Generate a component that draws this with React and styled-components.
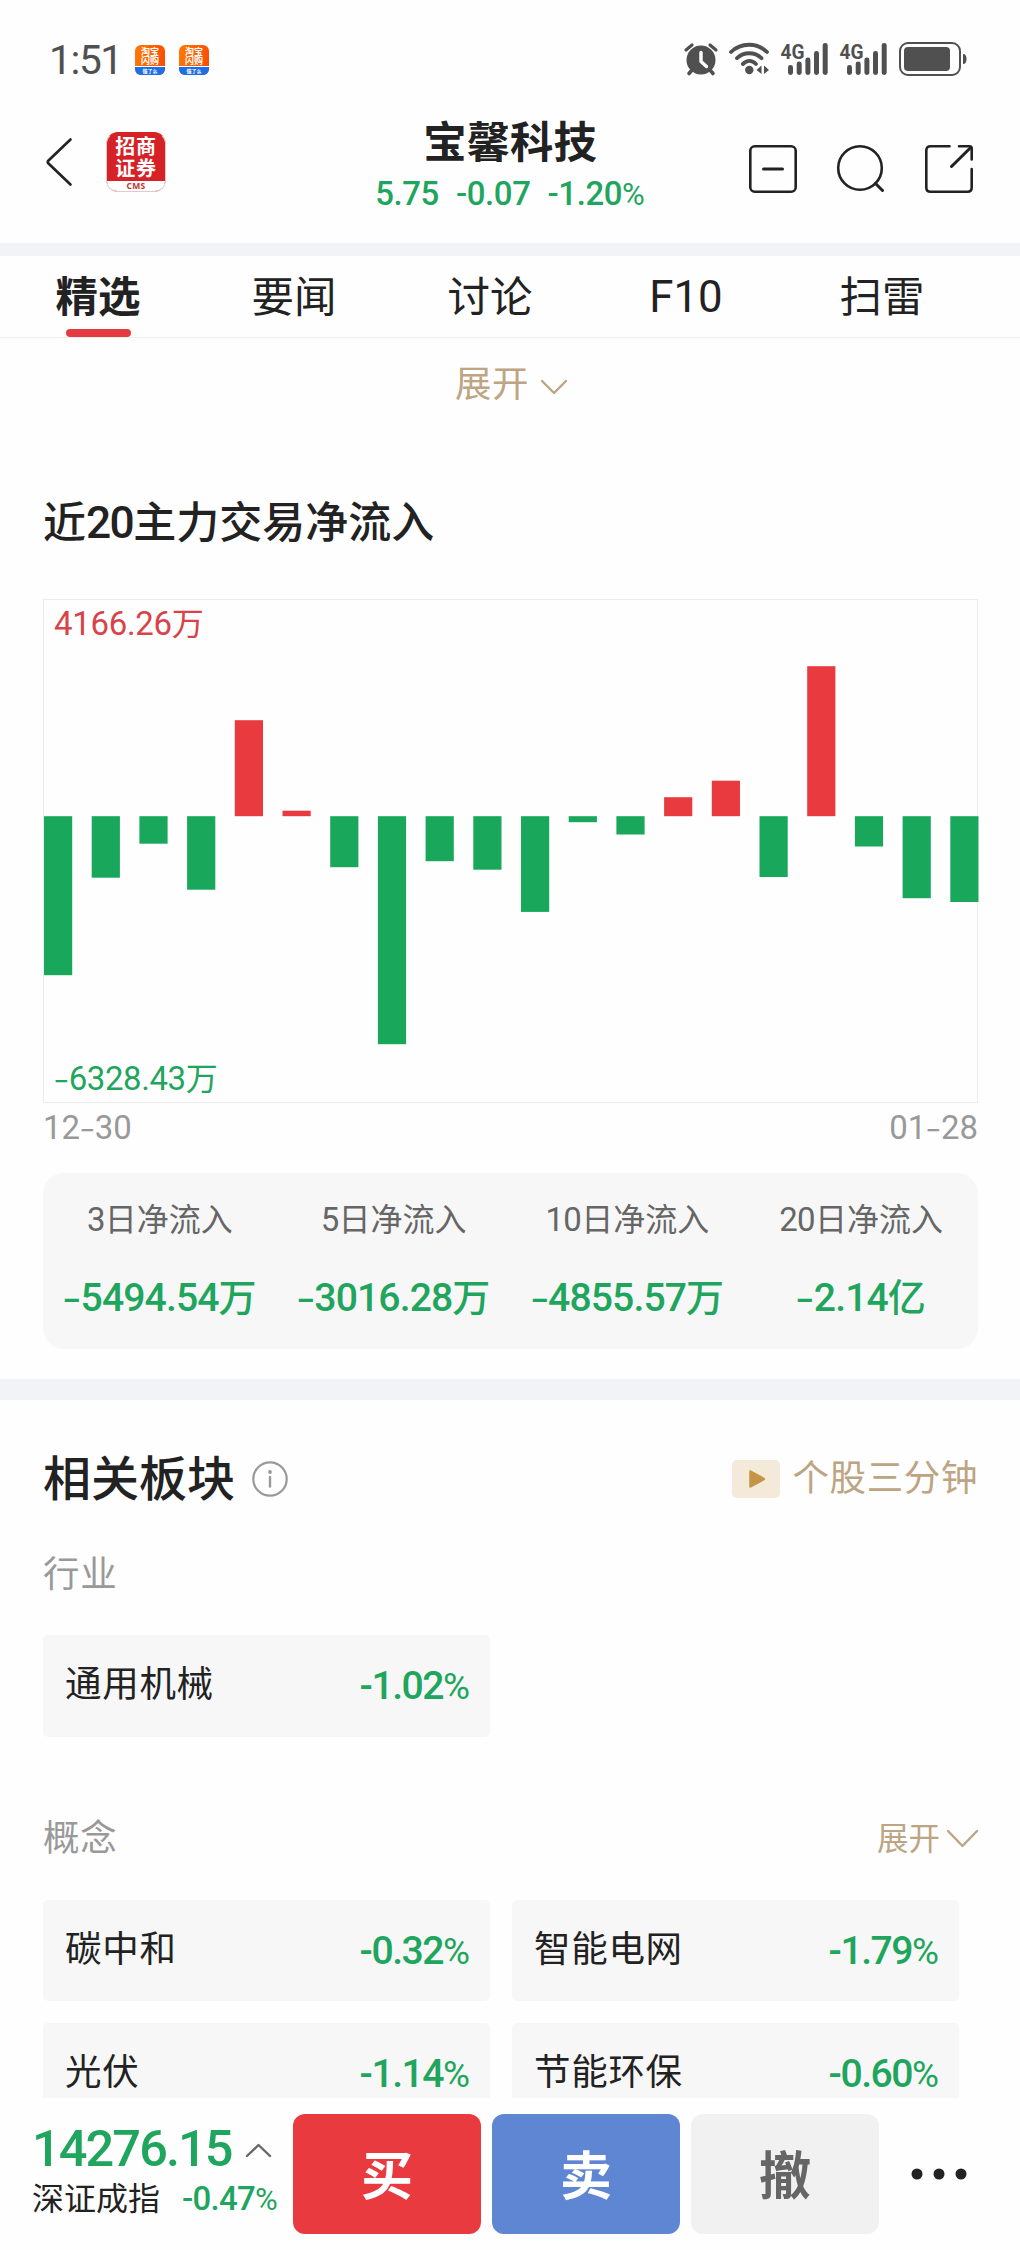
import React from "react";
import styled, { createGlobalStyle } from "styled-components";

const GREEN = "#1fa55d";
const RED = "#e93a3f";
const INK = "#222222";
const GOLD = "#bda483";

const Global = createGlobalStyle`
  * { box-sizing: border-box; }
  body { margin: 0; background: #fefefe; }
  button { border: 0; padding: 0; background: none; font: inherit; color: inherit; }
`;

const Page = styled.div`
  width: 1020px;
  height: 2250px;
  display: flex;
  flex-direction: column;
  overflow: hidden;
  background: #fefefe;
  color: ${INK};
  font-family: "Noto Sans CJK SC", "Noto Sans", sans-serif;
`;

const LabelBox = styled.span`
  display: block;
  flex: none;
  white-space: nowrap;
  font-size: ${(p) => p.$size}px;
  line-height: ${(p) => p.$line}px;
  font-weight: ${(p) => p.$weight || 400};
  letter-spacing: ${(p) => p.$track || 0}px;
  color: ${(p) => p.$color || "inherit"};
`;

const Digits = styled.span`
  font-family: Roboto, sans-serif;
  font-size: 1.03em;
  line-height: 0;
  letter-spacing: ${(p) => p.$track || 0}px;
`;

const PercentSign = styled.span`
  font-family: Roboto, sans-serif;
  font-size: 0.97em;
  font-weight: 400;
  line-height: 0;
  letter-spacing: 0;
`;

const LongDash = styled.span`
  display: inline-block;
  width: 0.46em;
  line-height: 0;
  text-align: center;
  letter-spacing: 0;
  transform: scaleX(1.4);
`;

/* Figures are set in Roboto, everything else in the CJK face. */
function Label({ children, numTrack, longDash, ...rest }) {
  const parts = String(children).split(/([0-9A-Z.:]+|-|%)/).filter(Boolean);
  return (
    <LabelBox {...rest}>
      {parts.map((part, i) => {
        if (part === "%") return <PercentSign key={i}>%</PercentSign>;
        if (part === "-" && longDash) return <LongDash key={i}>-</LongDash>;
        if (/^[0-9A-Z.:-]+$/.test(part)) {
          return <Digits key={i} $track={numTrack}>{part}</Digits>;
        }
        return part;
      })}
    </LabelBox>
  );
}

const Svg = styled.svg`
  display: block;
  flex: none;
  overflow: visible;
`;

/* ---------- status bar ---------- */

const StatusBar = styled.div`
  height: 84px;
  flex: none;
  display: flex;
  align-items: flex-start;
  justify-content: space-between;
  padding: 30px 53px 0 49px;
  color: #505050;
`;

const StatusLeft = styled.div`
  display: flex;
  align-items: flex-start;
`;

const Notices = styled.div`
  display: flex;
  gap: 14px;
  padding: 15px 0 0 14px;
`;

const Clock = styled.div`
  width: 72px;
`;

const ShopIcon = styled.div`
  width: 30px;
  height: 30px;
  border-radius: 6px;
  overflow: hidden;
  background: linear-gradient(100deg, #ff7a00, #fb4a05);
  display: flex;
  flex-direction: column;
  align-items: center;
  color: #fff;
`;

const ShopText = styled.span`
  height: 21px;
  padding-top: 2px;
  font-size: 9px;
  line-height: 9px;
  font-weight: 700;
  text-align: center;
  width: 20px;
  word-break: break-all;
`;

const ShopStrip = styled.span`
  width: 30px;
  height: 9px;
  background: #1e6fe6;
  font-size: 5px;
  line-height: 8px;
  font-weight: 700;
  text-align: center;
  border-top: 1px solid #fff;
`;

const StatusRight = styled.div`
  display: flex;
  align-items: center;
  padding-top: 12px;
`;

const StatusGlyph = styled.div`
  margin-left: ${(p) => p.$gap}px;
`;

/* ---------- header ---------- */

const Header = styled.header`
  height: 159px;
  flex: none;
  display: grid;
  grid-template-columns: 330px 1fr 330px;
`;

const HeaderLeft = styled.div`
  display: flex;
  align-items: flex-start;
  padding: 48px 0 0 46px;
  gap: 34px;
`;

const Back = styled.div`
  padding-top: 6px;
`;

const Broker = styled.div`
  width: 60px;
  height: 60px;
  border-radius: 12px;
  background: #d62126;
  border: 1px solid #e3c9c9;
  border-top-color: #d62126;
  display: flex;
  flex-direction: column;
  align-items: center;
  color: #fff;
`;

const BrokerName = styled.div`
  height: 48px;
  padding-top: 2px;
  display: flex;
  flex-direction: column;
  font-size: 20px;
  line-height: 21.5px;
  font-weight: 700;
  letter-spacing: 0.7px;
`;

const BrokerTag = styled.span`
  width: 58px;
  height: 10px;
  border-radius: 0 0 11px 11px;
  background: #fff;
  color: #c3362f;
  font: 700 8.5px/9px "Open Sans", sans-serif;
  letter-spacing: 0.3px;
  text-align: center;
`;

const TitleBlock = styled.div`
  display: flex;
  flex-direction: column;
  align-items: center;
  padding-top: 24px;
`;

const Quote = styled.div`
  display: flex;
  gap: 17px;
  margin-top: -1px;
`;

const HeaderActions = styled.div`
  display: flex;
  align-items: flex-start;
  padding: 61px 0 0 59px;
  gap: 40px;
`;

const Band = styled.div`
  height: ${(p) => p.$h}px;
  flex: none;
  background: #f2f3f6;
`;

/* ---------- tabs ---------- */

const Tabs = styled.nav`
  height: 82px;
  flex: none;
  display: flex;
  border-bottom: 1px solid #eeeeef;
`;

const Tab = styled.button`
  width: 196px;
  height: 81px;
  display: flex;
  flex-direction: column;
  align-items: center;
  justify-content: space-between;
  padding-top: 7px;
`;

const Underline = styled.span`
  width: 65px;
  height: 8px;
  border-radius: 4px;
  background: #e33b41;
`;

/* ---------- content ---------- */

const Content = styled.main`
  height: 1760px;
  flex: none;
  overflow: hidden;
  display: flex;
  flex-direction: column;
`;

const Expand = styled.div`
  height: 93px;
  flex: none;
  display: flex;
  justify-content: center;
  padding: 18px 0 0 2px;
  gap: 12px;
`;

const FlowSection = styled.section`
  height: 948px;
  flex: none;
  padding: 57px 42px 0 43px;
  display: flex;
  flex-direction: column;
`;

const ChartFrame = styled.div`
  height: 504px;
  margin-top: 49px;
  flex: none;
  border: 1px solid #ececec;
  display: grid;
`;

const ChartLayer = styled.div`
  grid-area: 1 / 1;
`;

const ChartLabels = styled(ChartLayer)`
  display: flex;
  flex-direction: column;
  justify-content: space-between;
  margin-top: -1px;
  padding: 0 0 3px 10px;
`;

const Dates = styled.div`
  display: flex;
  justify-content: space-between;
  color: #999;
`;

const Summary = styled.div`
  margin-top: 26px;
  height: 176px;
  flex: none;
  border-radius: 21px;
  background: #f7f7f7;
  display: grid;
  grid-template-columns: repeat(4, 1fr);
`;

const SummaryCell = styled.div`
  display: flex;
  flex-direction: column;
  align-items: center;
  padding-top: 21px;
  gap: 27px;
`;

const SectorSection = styled.section`
  flex: none;
  padding: 0 42px 0 43px;
  display: flex;
  flex-direction: column;
`;

const SectorHead = styled.div`
  height: 130px;
  padding-top: 41px;
  display: flex;
  justify-content: space-between;
`;

const HeadGroup = styled.div`
  display: flex;
  align-items: flex-start;
  gap: ${(p) => p.$gap}px;
`;

const Offset = styled.div`
  padding-top: ${(p) => p.$top}px;
`;

const SubHead = styled.div`
  height: ${(p) => p.$h}px;
  padding-top: ${(p) => p.$top}px;
  display: flex;
  justify-content: space-between;
  color: #999;
`;

const Cards = styled.div`
  display: grid;
  grid-template-columns: 447px 447px;
  gap: 22px;
`;

const Card = styled.div`
  height: ${(p) => p.$h || 101}px;
  border-radius: 5px;
  background: #f7f7f7;
  display: flex;
  justify-content: space-between;
  padding: 21px 20px 0 22px;
`;

/* ---------- trade bar ---------- */

const TradeBar = styled.footer`
  flex: 1;
  display: flex;
  align-items: flex-start;
  padding-top: 16px;
  background: #fefefe;
`;

const IndexBlock = styled.div`
  width: 293px;
  padding-left: 32px;
  display: flex;
  flex-direction: column;
`;

const IndexTop = styled.div`
  display: flex;
  height: 60px;
`;

const IndexValue = styled.div`
  width: 214px;
`;

const IndexBottom = styled.div`
  display: flex;
  gap: 22px;
`;

const Buttons = styled.div`
  display: flex;
  gap: 11px;
`;

const TradeButton = styled.button`
  width: 188px;
  height: 120px;
  border-radius: 12px;
  background: ${(p) => p.$bg};
  color: ${(p) => p.$fg};
  display: flex;
  justify-content: center;
  padding-top: 23px;
`;

const More = styled.div`
  padding: 54px 0 0 32px;
`;

/* ---------- drawings ---------- */

function Alarm() {
  return (
    <Svg width="34" height="34" viewBox="0 0 34 34" fill="none">
      <path d="M2 8 L8 3 M26 3 L32 8" stroke="#505050" strokeWidth="3.2" strokeLinecap="round" />
      <circle cx="17" cy="18" r="14.5" fill="#505050" />
      <path d="M8 28 L5 31.5 M26 28 L29 31.5" stroke="#505050" strokeWidth="3.6" strokeLinecap="round" />
      <path d="M17 10.5 V19.5 L22.5 24.5" stroke="#fefefe" strokeWidth="3.4" strokeLinecap="round" strokeLinejoin="round" />
    </Svg>
  );
}

function Wifi() {
  return (
    <Svg width="41" height="34" viewBox="0 0 41 34" fill="none" stroke="#505050" strokeLinecap="round">
      <path d="M2 10 C12 0.3 28 0.3 38 10" strokeWidth="3.8" />
      <path d="M8 16.2 C15 9.6 25.5 9.6 32.5 16.2" strokeWidth="3.8" />
      <path d="M13.8 22 C18 18 23 18 27 22" strokeWidth="3.8" />
      <circle cx="20.3" cy="28" r="4.2" fill="#505050" stroke="none" />
      <path d="M32.5 23.5 V32 L27.5 28 Z M35 23.5 L40 28 L35 32 Z" fill="#505050" stroke="none" />
    </Svg>
  );
}

function Signal() {
  const bars = [[7, 23], [15.7, 19.5], [24.4, 15.5], [33, 9], [41.7, 1]];
  return (
    <Svg width="47" height="34" viewBox="0 0 47 34">
      {bars.map(([x, y]) => (
        <rect key={x} x={x} y={y} width="5" height={33 - y} rx="2.4" fill="#505050" />
      ))}
      <text x="-0.5" y="17" fontFamily="Roboto, sans-serif" fontWeight="700" fontSize="21" textLength="24" lengthAdjust="spacingAndGlyphs" fill="#505050">4G</text>
    </Svg>
  );
}

function Battery() {
  return (
    <Svg width="68" height="34" viewBox="0 0 68 34">
      <rect x="1" y="1" width="60" height="32" rx="8" fill="none" stroke="#505050" strokeWidth="2" />
      <rect x="5" y="5" width="46" height="24" rx="4" fill="#505050" />
      <path d="M64 12 Q67.5 12 67.5 17 Q67.5 22 64 22 Z" fill="#505050" />
    </Svg>
  );
}

function MinusSquare() {
  return (
    <Svg width="48" height="48" viewBox="0 0 48 48" fill="none" stroke={INK} strokeWidth="2.6" strokeLinecap="round">
      <rect x="1.3" y="1.3" width="45.4" height="45.4" rx="4.5" />
      <path d="M14.5 24 H33.5" strokeWidth="3" />
    </Svg>
  );
}

function Search() {
  return (
    <Svg width="48" height="48" viewBox="0 0 48 48" fill="none" stroke={INK} strokeWidth="2.6" strokeLinecap="round">
      <circle cx="23" cy="23" r="21.8" />
      <path d="M38.5 38.5 L45.5 45.5" strokeWidth="3" />
    </Svg>
  );
}

function Share() {
  return (
    <Svg width="48" height="48" viewBox="0 0 48 48" fill="none" stroke={INK} strokeWidth="2.6" strokeLinecap="round" strokeLinejoin="round">
      <path d="M24.5 1.3 H5.5 Q1.3 1.3 1.3 5.5 V42.5 Q1.3 46.7 5.5 46.7 H42.5 Q46.7 46.7 46.7 42.5 V24" />
      <path d="M34 1.3 H44 Q46.7 1.3 46.7 4 V14.5" />
      <path d="M46 2.2 L26.5 21.5" strokeWidth="3" />
    </Svg>
  );
}

function Chevron({ w, h, color, up, stroke = 2.4 }) {
  const d = up
    ? `M1 ${h - 1} L${w / 2} 1 L${w - 1} ${h - 1}`
    : `M1 1 L${w / 2} ${h - 1} L${w - 1} 1`;
  return (
    <Svg width={w} height={h} viewBox={`0 0 ${w} ${h}`} fill="none">
      <path d={d} stroke={color} strokeWidth={stroke} strokeLinecap="round" strokeLinejoin="round" />
    </Svg>
  );
}

const FLOWS = [
  -159, -61.5, -27.5, -73.5, 96, 5.5, -51, -228, -45, -53.5,
  -95.7, -6, -18.3, 19, 35.5, -60.8, 150, -30.3, -82, -85.8,
];

function FlowChart() {
  return (
    <Svg width="933" height="502" viewBox="0 0 933 502">
      {FLOWS.map((v, i) => (
        <rect
          key={i}
          x={i * 47.7}
          y={v > 0 ? 216.2 - v : 216.2}
          width="28.2"
          height={Math.abs(v)}
          fill={v > 0 ? RED : "#19a75c"}
        />
      ))}
    </Svg>
  );
}

const TABS = ["精选", "要闻", "讨论", "F10", "扫雷"];
const SUMMARY = [
  ["3日净流入", "-5494.54万"],
  ["5日净流入", "-3016.28万"],
  ["10日净流入", "-4855.57万"],
  ["20日净流入", "-2.14亿"],
];
const CONCEPTS = [
  ["碳中和", "-0.32%"],
  ["智能电网", "-1.79%"],
  ["光伏", "-1.14%"],
  ["节能环保", "-0.60%"],
];

function SectorCard({ name, value, h }) {
  return (
    <Card $h={h}>
      <Label $size={36.5} $line={52} $track={0.7}>{name}</Label>
      <Label $size={38} $line={53} $weight={500} numTrack={-1.5} $color={GREEN}>{value}</Label>
    </Card>
  );
}

function ShopNotice() {
  return (
    <ShopIcon>
      <ShopText>淘宝闪购</ShopText>
      <ShopStrip>饿了么</ShopStrip>
    </ShopIcon>
  );
}

export default function App() {
  return (
    <Page>
      <Global />
      <StatusBar>
        <StatusLeft>
          <Clock>
            <Label $size={39.5} $line={54} numTrack={-1.4}>1:51</Label>
          </Clock>
          <Notices>
            <ShopNotice />
            <ShopNotice />
          </Notices>
        </StatusLeft>
        <StatusRight>
          <Alarm />
          <StatusGlyph $gap={11}><Wifi /></StatusGlyph>
          <StatusGlyph $gap={11}><Signal /></StatusGlyph>
          <StatusGlyph $gap={12}><Signal /></StatusGlyph>
          <StatusGlyph $gap={12}><Battery /></StatusGlyph>
        </StatusRight>
      </StatusBar>

      <Header>
        <HeaderLeft>
          <Back>
            <Svg width="26" height="48" viewBox="0 0 26 48" fill="none">
              <path d="M24.5 1.5 L2.5 22.5 Q1 24 2.5 25.5 L24.5 46.5" stroke={INK} strokeWidth="2.6" strokeLinecap="round" />
            </Svg>
          </Back>
          <Broker>
            <BrokerName>
              <span>招商</span>
              <span>证券</span>
            </BrokerName>
            <BrokerTag>CMS</BrokerTag>
          </Broker>
        </HeaderLeft>
        <TitleBlock>
          <Label $size={43.4} $line={62} $weight={700}>宝馨科技</Label>
          <Quote>
            <Label $size={32} $line={44} $weight={500} numTrack={-0.4} $color={GREEN}>5.75</Label>
            <Label $size={32} $line={44} $weight={500} numTrack={-0.4} $color={GREEN}>-0.07</Label>
            <Label $size={32} $line={44} $weight={500} numTrack={-0.4} $color={GREEN}>-1.20%</Label>
          </Quote>
        </TitleBlock>
        <HeaderActions>
          <MinusSquare />
          <Search />
          <Share />
        </HeaderActions>
      </Header>

      <Band $h={13} />

      <Tabs>
        {TABS.map((t, i) => (
          <Tab key={t}>
            <Label $size={42.5} $line={62} $weight={i === 0 ? 700 : 400}>{t}</Label>
            {i === 0 && <Underline />}
          </Tab>
        ))}
      </Tabs>

      <Content>
        <Expand>
          <Label $size={36.5} $line={52} $track={0.5} $color={GOLD}>展开</Label>
          <Offset $top={24}><Chevron w={26} h={14} color={GOLD} /></Offset>
        </Expand>

        <FlowSection>
          <Label $size={43} $line={62} $weight={500} numTrack={-1.6}>近20主力交易净流入</Label>
          <ChartFrame>
            <ChartLayer><FlowChart /></ChartLayer>
            <ChartLabels>
              <Label $size={32} $line={45} numTrack={-0.3} $color="#d8434a">4166.26万</Label>
              <Label $size={32} $line={46} numTrack={-0.4} longDash $color={GREEN}>-6328.43万</Label>
            </ChartLabels>
          </ChartFrame>
          <Dates>
            <Label $size={32} $line={44} longDash>12-30</Label>
            <Label $size={32} $line={44} longDash>01-28</Label>
          </Dates>
          <Summary>
            {SUMMARY.map(([name, value]) => (
              <SummaryCell key={name}>
                <Label $size={32} $line={46} numTrack={-0.6} $color="#666">{name}</Label>
                <Label $size={38} $line={56} $weight={500} numTrack={-0.9} longDash $color={GREEN}>{value}</Label>
              </SummaryCell>
            ))}
          </Summary>
        </FlowSection>

        <Band $h={21} />

        <SectorSection>
          <SectorHead>
            <HeadGroup $gap={17}>
              <Label $size={48} $line={68} $weight={500}>相关板块</Label>
              <Offset $top={20}>
                <Svg width="36" height="36" viewBox="0 0 36 36">
                  <circle cx="18" cy="18" r="16.7" fill="none" stroke="#999" strokeWidth="2.2" />
                  <circle cx="18" cy="11" r="1.9" fill="#999" />
                  <path d="M18 16 V25.5" stroke="#999" strokeWidth="2.4" strokeLinecap="round" />
                </Svg>
              </Offset>
            </HeadGroup>
            <HeadGroup $gap={13}>
              <Offset $top={19}>
                <Svg width="48" height="38" viewBox="0 0 48 38">
                  <rect width="48" height="38" rx="5" fill="#f4ead9" />
                  <path d="M18.5 11.5 L32 19 L18.5 26.5 Z" fill="#c59546" stroke="#c59546" strokeWidth="2.5" strokeLinejoin="round" />
                </Svg>
              </Offset>
              <Offset $top={9}>
                <Label $size={36.5} $line={52} $track={0.6} $color={GOLD}>个股三分钟</Label>
              </Offset>
            </HeadGroup>
          </SectorHead>

          <SubHead $h={105} $top={16}>
            <Label $size={36.5} $line={52} $track={0.7}>行业</Label>
          </SubHead>
          <Cards>
            <SectorCard name="通用机械" value="-1.02%" h={102} />
          </Cards>

          <SubHead $h={163} $top={73}>
            <Label $size={36.5} $line={52} $track={0.7}>概念</Label>
            <HeadGroup $gap={7}>
              <Offset $top={3}>
                <Label $size={31.5} $line={46} $color={GOLD}>展开</Label>
              </Offset>
              <Offset $top={20}><Chevron w={31} h={17} color={GOLD} /></Offset>
            </HeadGroup>
          </SubHead>
          <Cards>
            {CONCEPTS.map(([name, value]) => (
              <SectorCard key={name} name={name} value={value} />
            ))}
          </Cards>
        </SectorSection>
      </Content>

      <TradeBar>
        <IndexBlock>
          <IndexTop>
            <IndexValue>
              <Label $size={49} $line={62} $weight={500} numTrack={-1.9} $color={GREEN}>14276.15</Label>
            </IndexValue>
            <Offset $top={30}><Chevron w={25} h={13} color="#666" up /></Offset>
          </IndexTop>
          <IndexBottom>
            <Label $size={32} $line={44}>深证成指</Label>
            <Label $size={32} $line={44} $weight={500} numTrack={-0.7} $color={GREEN}>-0.47%</Label>
          </IndexBottom>
        </IndexBlock>
        <Buttons>
          <TradeButton $bg={RED} $fg="#fff"><Label $size={52} $line={72} $weight={700}>买</Label></TradeButton>
          <TradeButton $bg="#5e86d3" $fg="#fff"><Label $size={52} $line={72} $weight={700}>卖</Label></TradeButton>
          <TradeButton $bg="#f1f1f1" $fg="#666"><Label $size={52} $line={72} $weight={700}>撤</Label></TradeButton>
        </Buttons>
        <More>
          <Svg width="56" height="12" viewBox="0 0 56 12" fill={INK}>
            <circle cx="6" cy="6" r="5.5" />
            <circle cx="28" cy="6" r="5.5" />
            <circle cx="50" cy="6" r="5.5" />
          </Svg>
        </More>
      </TradeBar>
    </Page>
  );
}
